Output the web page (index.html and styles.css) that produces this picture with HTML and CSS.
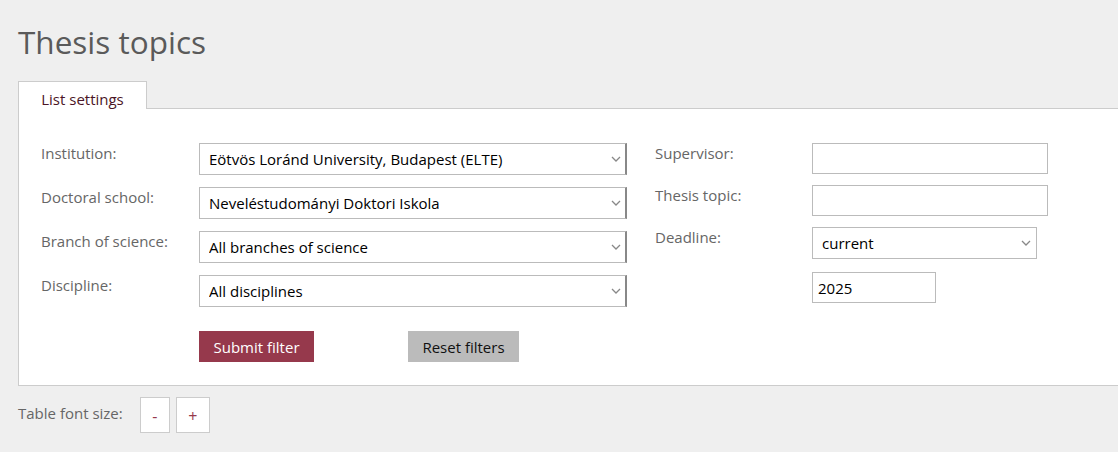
FILE: index.html
```html
<!DOCTYPE html>
<html lang="en">
<head>
<meta charset="utf-8">
<title>Thesis topics</title>
<link rel="stylesheet" href="styles.css">
</head>
<body>
<div class="page">
  <h1 class="title">Thesis topics</h1>
  <div class="tabs">
    <div class="tab">List settings</div>
  </div>
  <div class="panel">
    <div class="columns">
      <div class="col col-left">
        <div class="row">
          <label class="label">Institution:</label>
          <select class="sel sel-wide"><option>Eötvös Loránd University, Budapest (ELTE)</option></select>
        </div>
        <div class="row">
          <label class="label">Doctoral school:</label>
          <select class="sel sel-wide"><option>Neveléstudományi Doktori Iskola</option></select>
        </div>
        <div class="row">
          <label class="label">Branch of science:</label>
          <select class="sel sel-wide"><option>All branches of science</option></select>
        </div>
        <div class="row">
          <label class="label">Discipline:</label>
          <select class="sel sel-wide"><option>All disciplines</option></select>
        </div>
        <div class="buttons">
          <button class="btn btn-submit">Submit filter</button>
          <button class="btn btn-reset">Reset filters</button>
        </div>
      </div>
      <div class="col col-right">
        <div class="row row-r">
          <label class="label label-r">Supervisor:</label>
          <input class="inp inp-wide" type="text">
        </div>
        <div class="row row-r">
          <label class="label label-r">Thesis topic:</label>
          <input class="inp inp-wide" type="text">
        </div>
        <div class="row row-r row-deadline">
          <label class="label label-r">Deadline:</label>
          <select class="sel sel-mid"><option>current</option></select>
        </div>
        <div class="row row-r">
          <span class="label label-r"></span>
          <input class="inp inp-year" type="text" value="2025">
        </div>
      </div>
    </div>
  </div>
  <div class="fontsize">
    <span class="fs-label">Table font size:</span>
    <button class="fs-btn fs-minus">-</button>
    <button class="fs-btn fs-plus">+</button>
  </div>
</div>
</body>
</html>
```

FILE: styles.css
```css
html, body {
  margin: 0;
  padding: 0;
  overflow: hidden;
  background: #efefef;
}
body {
  font-family: "Open Sans", "Liberation Sans", sans-serif;
  font-size: 15px;
  color: #666;
}
.page {
  padding: 0 0 0 18px;
}
.title {
  margin: 0;
  padding-top: 20px;
  font-size: 31.5px;
  font-weight: 400;
  line-height: 44px;
  color: #5a5a5a;
  height: 61px;
}
.tabs {
  display: flex;
}
.tab {
  background: #fff;
  border: 1px solid #ccc;
  border-bottom: none;
  height: 27px;
  width: 127px;
  box-sizing: content-box;
  text-align: center;
  line-height: 34px;
  color: #4b1525;
  font-size: 15px;
  margin-bottom: -1px;
  position: relative;
  z-index: 1;
}
.panel {
  background: #fff;
  border: 1px solid #ccc;
  margin-right: -4px;
  padding: 34px 22px 23px 22px;
}
.columns {
  display: flex;
  gap: 28px;
}
.col {
  display: flex;
  flex-direction: column;
}
.row {
  display: flex;
  align-items: flex-start;
  margin-bottom: 12px;
}
.row-r {
  margin-bottom: 11px;
}
.row-deadline {
  margin-bottom: 13px;
}
.label {
  width: 158px;
  flex: none;
  padding-top: 0;
  line-height: 20px;
  color: #666;
}
.label-r {
  width: 157px;
}
.sel {
  -webkit-appearance: none;
  appearance: none;
  font-family: "Open Sans", "Liberation Sans", sans-serif;
  font-size: 15px;
  color: #000;
  background-color: #fff;
  background-image: url("data:image/svg+xml;utf8,<svg xmlns='http://www.w3.org/2000/svg' width='10' height='6' viewBox='0 0 10 6'><path d='M1 1 L5 5 L9 1' fill='none' stroke='%23888' stroke-width='1.3'/></svg>");
  background-repeat: no-repeat;
  background-position: right 5px center;
  border: 1px solid #bbb;
  border-radius: 0;
  height: 32px;
  padding: 0 22px 0 9px;
  box-sizing: border-box;
}
.sel-wide {
  width: 428px;
  border-right: 2px solid #888;
  background-position: right 4px center;
}
.sel-mid {
  width: 225px;
}
.inp {
  font-family: "Open Sans", "Liberation Sans", sans-serif;
  font-size: 15px;
  color: #000;
  background: #fff;
  border: 1px solid #bbb;
  border-radius: 0;
  height: 31px;
  padding: 0 5px;
  box-sizing: border-box;
  outline: none;
}
.inp-wide {
  width: 236px;
}
.inp-year {
  width: 124px;
}
.buttons {
  display: flex;
  margin-top: 12px;
  padding-left: 158px;
  gap: 94px;
}
.btn {
  font-family: "Open Sans", "Liberation Sans", sans-serif;
  font-size: 15px;
  height: 31px;
  border: none;
  border-radius: 0;
  padding: 0 14px;
  cursor: pointer;
}
.btn-submit {
  background: #96394c;
  color: #fff;
  width: 115px;
}
.btn-reset {
  background: #bbb;
  color: #111;
  width: 111px;
}
.fontsize {
  display: flex;
  align-items: center;
  padding-top: 11px;
  gap: 6px;
}
.fs-label {
  color: #666;
  font-size: 15px;
  margin-right: 11px;
  margin-top: -5px;
}
.fs-btn {
  background: #fff;
  border: 1px solid #ccc;
  border-radius: 0;
  height: 36px;
  color: #96394c;
  font-family: "Open Sans", "Liberation Sans", sans-serif;
  font-size: 16px;
  padding: 0;
  padding-top: 2px;
}
.fs-minus {
  width: 30px;
}
.fs-plus {
  width: 34px;
}
```
